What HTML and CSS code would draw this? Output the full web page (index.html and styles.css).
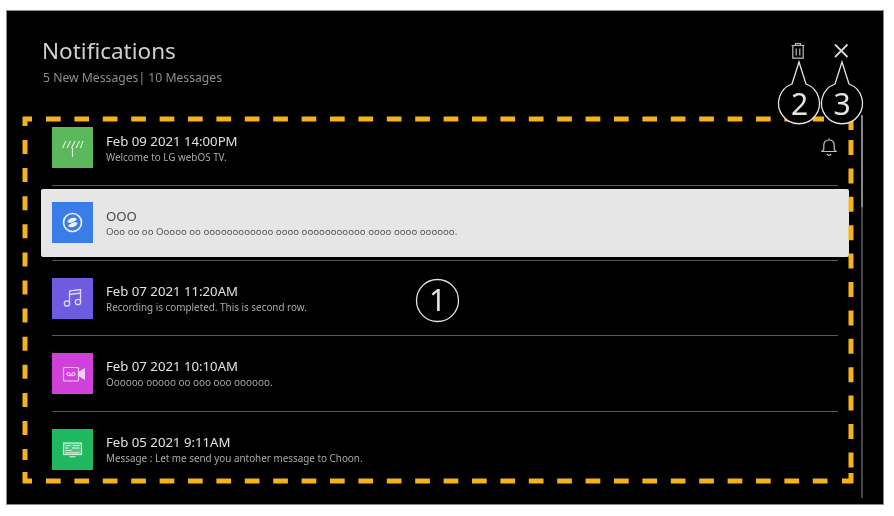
FILE: index.html
```html
<!DOCTYPE html>
<html lang="en">
<head>
<meta charset="utf-8">
<title>Notifications</title>
<link rel="stylesheet" href="styles.css">
</head>
<body>
<main class="screen">
  <header class="head">
    <div class="head-text">
      <h1 class="title">Notifications</h1>
      <p class="count">5 New Messages| 10 Messages</p>
    </div>
    <div class="head-actions">
      <svg class="act" width="20" height="20" viewBox="0 0 20 20" fill="none" stroke="#bdbdbd" stroke-width="1.2"><path d="M3.5 4.5h13M7.5 4.5V2.6h5v1.9M4.8 4.5v12.6h10.4V4.5M8.2 7.5v7M11.8 7.5v7"/></svg>
      <svg class="act" width="20" height="20" viewBox="0 0 20 20" fill="none" stroke="#d6d6d6" stroke-width="1.8"><path d="M4 3.5l12.5 12.5M16.5 3.5L4 16"/></svg>
    </div>
  </header>
  <div class="body">
    <ul class="list">
      <li class="row">
        <svg class="tile" viewBox="0 0 41 41"><rect width="41" height="41" fill="#5cb85c"/><path d="M10.5 21l3.5-7M15 21l3.5-7M19.500 21l3.500-7M24 21l3.500-7M28.500 21l2.500-7M20.500 21v9" fill="none" stroke="#dcefd9" stroke-width="1.200"/></svg>
        <div class="txt"><div class="when">Feb 09 2021 14:00PM</div><div class="msg">Welcome to LG webOS TV.</div></div>
        <svg class="bell" width="18" height="20" viewBox="0 0 18 20" fill="none" stroke="#c4c4c4" stroke-width="1.2"><path d="M2 14.500h14l-1.800-2.200V8.200C14.200 5 12 3 9 3S3.800 5 3.800 8.200v4.100zM7 17c.4 1 1 1.400 2 1.400s1.600-.4 2-1.400M9 1.500V3"/></svg>
      </li>
      <li class="row row-focus">
        <div class="card">
          <svg class="tile" viewBox="0 0 41 41"><rect width="41" height="41" fill="#3a7de8"/><circle cx="20.500" cy="20.500" r="9" fill="none" stroke="#e6eefb" stroke-width="1.700"/><path d="M15.500 19.500c1-3 5-4.500 8-3.500 1.500.5 1.500 2 .2 2.500-2.500 1-3 2.500-5.700 2.300-1.200 0-2.700-.2-2.500-1.300zM25.500 21.500c-1 3-5 4.500-8 3.500-1.500-.5-1.500-2-.2-2.500 2.500-1 3-2.500 5.700-2.300 1.200 0 2.700.2 2.500 1.300z" fill="#eef3fc"/></svg>
          <div class="txt"><div class="when">OOO</div><div class="msg">Ooo oo oo Ooooo oo oooooooooooo oooo ooooooooooo oooo oooo oooooo.</div></div>
        </div>
      </li>
      <li class="row">
        <svg class="tile" viewBox="0 0 41 41"><rect width="41" height="41" fill="#6e5be0"/><g fill="none" stroke="#ddd8f8" stroke-width="1.300"><path d="M17.500 25.500V13l11-1.500V24M17.500 16.500l11-1.500"/><circle cx="15" cy="25.500" r="2.700"/><circle cx="26" cy="24" r="2.700"/></g></svg>
        <div class="txt"><div class="when">Feb 07 2021 11:20AM</div><div class="msg">Recording is completed. This is second row.</div></div>
      </li>
      <li class="row">
        <svg class="tile" viewBox="0 0 41 41"><rect width="41" height="41" fill="#cf41d9"/><rect x="11.500" y="14.500" width="15" height="13.500" rx="1" fill="none" stroke="#f3cdf5" stroke-width="1.200"/><g fill="none" stroke="#f8e2f9" stroke-width="1"><circle cx="16.500" cy="21" r="1.600"/><circle cx="21.500" cy="21" r="1.600"/><path d="M16.500 22.600h5"/></g><path d="M27 18.500l6-3.500v12l-6-3.500z" fill="#f3cdf5"/></svg>
        <div class="txt"><div class="when">Feb 07 2021 10:10AM</div><div class="msg">Oooooo ooooo oo ooo ooo oooooo.</div></div>
      </li>
      <li class="row">
        <svg class="tile" viewBox="0 0 41 41"><rect width="41" height="41" fill="#1fb85f"/><rect x="11.500" y="14" width="18" height="11.500" fill="#4fc67f" stroke="#d2f1dd" stroke-width="1.200"/><path d="M13.500 16.500h5M21 16.500h6.500M13.500 19h3M20 19h7.500M13.500 21.500h6M13.500 23.800h14M17.500 27.800h6" fill="none" stroke="#dff6e7" stroke-width="1.100"/></svg>
        <div class="txt"><div class="when">Feb 05 2021 9:11AM</div><div class="msg">Message : Let me send you antoher message to Choon.</div></div>
      </li>
    </ul>
    <div class="scroll"><div class="thumb"></div></div>
  </div>
  <svg class="notes" width="894" height="516" viewBox="0 0 894 516" fill="none">
    <g stroke="#f5b21b" stroke-width="5">
      <path d="M32 119H25V126"/>
      <path d="M46 119H824" stroke-dasharray="14.700 13.700"/>
      <path d="M25 140V460" stroke-dasharray="14 14.100"/>
      <path d="M842 119H851V130"/>
      <path d="M851 140V470" stroke-dasharray="15 13.400"/>
      <path d="M25 472V481H32"/>
      <path d="M46 481H830" stroke-dasharray="14.700 13.700"/>
      <path d="M842 481H851V473"/>
    </g>
    <g stroke="#e4e4e4" stroke-width="1.300" fill="#000">
      <circle cx="437.500" cy="300.500" r="21"/>
      <path d="M792 84L799 62L806 84A20.500 20.500 0 1 1 792 84Z"/>
      <path d="M835 84L842 62L849 84A20.500 20.500 0 1 1 835 84Z"/>
    </g>
    <g class="mark">
      <text x="437.500" y="311">1</text>
      <text x="799.500" y="114.500">2</text>
      <text x="842" y="114.500">3</text>
    </g>
  </svg>
</main>
</body>
</html>
```
FILE: styles.css
```css
* { box-sizing: border-box; }
html, body { margin: 0; padding: 0; }
body {
  width: 894px;
  height: 516px;
  background: #fff;
  font-family: "Noto Sans", "Open Sans", sans-serif;
  overflow: hidden;
}
.screen {
  width: 878px;
  height: 495px;
  margin: 10px 0 0 6px;
  background: #000;
  border: 1px solid #8a8a8a;
  display: flex;
  flex-direction: column;
}
.screen > .head, .screen > .body { filter: blur(0.45px); }
.notes { filter: blur(0.3px); }
.head {
  height: 99.400px;
  flex: none;
  display: flex;
  justify-content: space-between;
  padding: 25px 32px 0 35px;
}
.title {
  margin: 0;
  font-size: 22.500px;
  line-height: 30px;
  font-weight: 400;
  color: #cfcfcf;
}
.count {
  margin: 3px 0 0 1px;
  font-size: 12.200px;
  line-height: 17px;
  color: #8f8f8f;
}
.head-actions {
  display: flex;
  gap: 23px;
  padding-top: 5px;
  align-items: flex-start;
}
.body {
  flex: 1;
  display: flex;
  min-height: 0;
}
.list {
  list-style: none;
  margin: 0 0 0 45px;
  padding: 0;
  width: 786px;
  flex: none;
}
.row {
  height: 75.300px;
  display: flex;
  align-items: center;
  gap: 13px;
  border-bottom: 1px solid #5a5a5a;
  position: relative;
}
.row:last-child { border-bottom: 0; }
.tile { width: 41px; height: 41px; flex: none; display: block; }
.txt { flex: 1; min-width: 0; padding-top: 1px; }
.when {
  font-size: 13.200px;
  line-height: 17px;
  color: #e2e2e2;
}
.msg {
  font-size: 9.900px;
  line-height: 14px;
  color: #aaa;
}
.bell { position: absolute; right: 0; top: 27px; }
.card {
  flex: 1;
  height: 68px;
  margin: 0 -11px;
  padding: 0 11px;
  display: flex;
  align-items: center;
  gap: 13px;
  background: #e6e6e6;
  border-radius: 2px;
}
.card .when { color: #4a4a4a; }
.card .msg { color: #555; font-size: 9.650px; }
.scroll {
  width: 2px;
  margin: 5px 0 6px 23px;
  background: #46464a;
}
.thumb { height: 92px; background: #85858a; }
.notes {
  position: absolute;
  left: 0;
  top: 0;
  pointer-events: none;
}
.mark text {
  font-family: "Noto Sans", sans-serif;
  font-size: 30px;
  fill: #e4e4e4;
  text-anchor: middle;
}
```
